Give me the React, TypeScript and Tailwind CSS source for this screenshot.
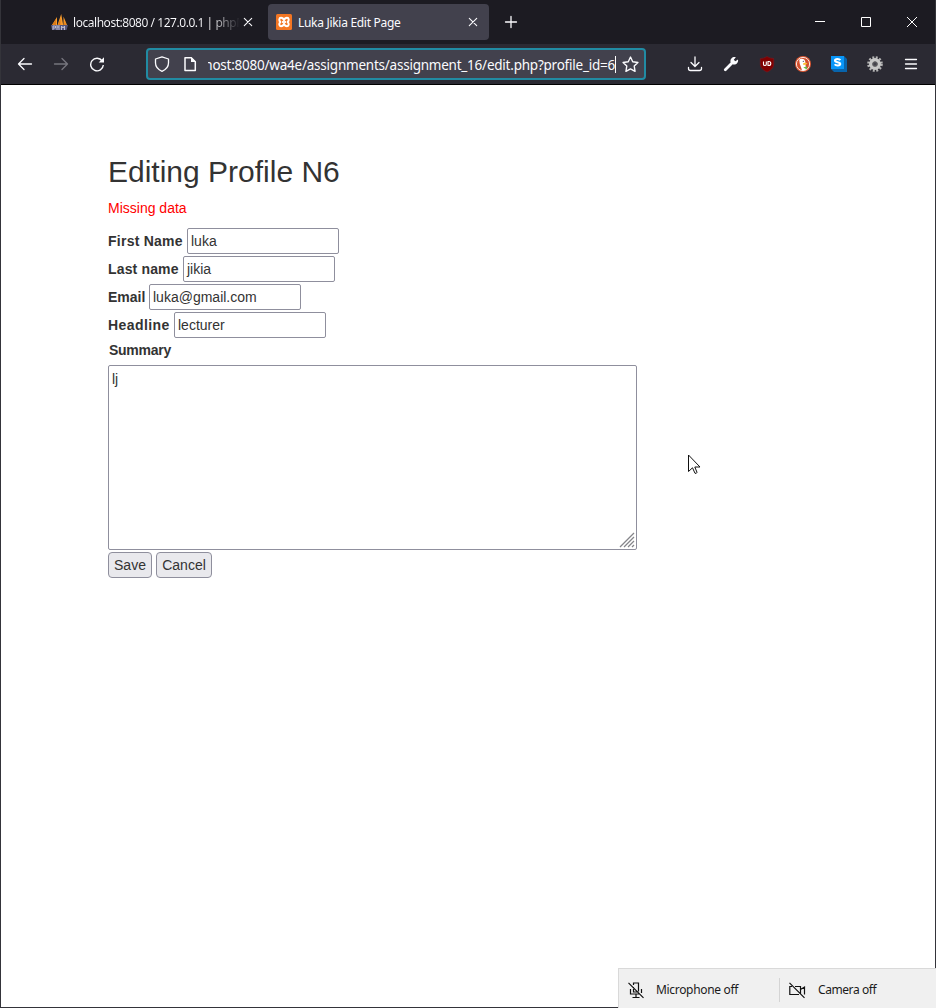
import React from 'react';
import type { ReactNode } from 'react';

function PmaLogo() {
  return (
    <svg className="shrink-0" width="18" height="17" viewBox="0 0 18 17">
      <path d="M1 11 6 3v8zM6.500 11 10.200 0l2 11zM12.500 11V2.500l3.500 8.500z" fill="#f89c2c" />
      <path d="M1 11 5 5v6zM7 11l2.500-7v7zM13 11l1-4 .8 4z" fill="#dc7a16" />
      <path d="M0 11h17l-1.500 5H1z" fill="#55567c" />
      <path d="M2 16v-4h2.500v2H2m4-3v5m0-3h2m0-2v5m2.500 0v-4l1.500 2 1.500-2v4" stroke="#c4c4d8" strokeWidth=".9" fill="none" />
    </svg>
  );
}

function XamppLogo() {
  return (
    <svg className="shrink-0" width="16" height="16" viewBox="0 0 16 16">
      <rect width="16" height="16" rx="1.500" fill="#f37623" />
      <path d="M8 6.200C7.300 4.300 6.300 3.800 5 3.800c-2 0-2.300 2.700-.6 4.200C2.700 9.500 3 12.200 5 12.200c1.300 0 2.300-.5 3-2.400.7 1.900 1.700 2.400 3 2.400 2 0 2.300-2.700.6-4.200 1.700-1.500 1.400-4.200-.6-4.200-1.300 0-2.300.5-3 2.400z" stroke="#fff" strokeWidth="2" fill="none" strokeLinejoin="round" />
      <path d="M6 8h4" stroke="#fff" strokeWidth="1.800" />
    </svg>
  );
}

function Line({ d, size = 16, color = '#fbfbfe', width = 1.3 }: { d: string; size?: number; color?: string; width?: number }) {
  return (
    <svg className="shrink-0" width={size} height={size} viewBox="0 0 16 16" fill="none" stroke={color} strokeWidth={width} strokeLinecap="round" strokeLinejoin="round">
      <path d={d} />
    </svg>
  );
}

function TabStrip() {
  return (
    <div className="flex h-[44px] items-center bg-[#1c1b22] text-[12px] text-[#fbfbfe]">
      <div className="flex h-9 w-[267px] shrink-0 items-center pl-[50px]">
        <PmaLogo />
        <span className="ml-[4px] mt-[2px] w-[167px] shrink-0 whitespace-nowrap bg-gradient-to-r from-[#fbfbfe] from-[82%] to-transparent bg-clip-text tracking-[-0.46px] text-transparent">localhost:8080 / 127.0.0.1 | phpM</span>
        <Line d="M4.300 4.300l7.400 7.400M11.700 4.300l-7.400 7.400" width={1.1} />
      </div>
      <div className="flex h-9 w-[221px] shrink-0 items-center rounded-[4px] bg-[#42414d] pl-2">
        <XamppLogo />
        <span className="ml-[6px] mt-[2px] w-[167px] shrink-0 whitespace-nowrap tracking-[-0.3px]">Luka Jikia Edit Page</span>
        <Line d="M4.300 4.300l7.400 7.400M11.700 4.300l-7.400 7.400" width={1.1} />
      </div>
      <div className="ml-[14px]"><Line d="M8 2.500v11M2.500 8h11" /></div>
      <div className="ml-auto flex items-center gap-[30px] pr-[15px]">
        <svg width="16" height="16"><path d="M3 7.500h10" stroke="#fff" /></svg>
        <svg width="16" height="16"><path d="M3.500 3.500h9v9h-9z" fill="none" stroke="#fff" /></svg>
        <svg width="16" height="16"><path d="M3 3l10 10M13 3 3 13" stroke="#fff" /></svg>
      </div>
    </div>
  );
}

function ToolSlot({ children }: { children: ReactNode }) {
  return <div className="flex w-9 shrink-0 items-center justify-center">{children}</div>;
}

function Gear() {
  return (
    <svg width="16" height="16" viewBox="0 0 16 16">
      <circle cx="8" cy="8" r="6.500" fill="none" stroke="#b5b5b5" strokeWidth="2.600" strokeDasharray="1.900 1.503" />
      <circle cx="8" cy="8" r="4.300" fill="none" stroke="#c8c8c8" strokeWidth="3.400" />
      <circle cx="8" cy="8" r="2.200" fill="#44434c" stroke="#777" strokeWidth=".7" />
    </svg>
  );
}

function Toolbar() {
  return (
    <div className="flex h-[41px] items-center border-b border-black bg-[#2b2a33] text-[#fbfbfe]">
      <div className="flex w-[145px] shrink-0 items-center pl-4">
        <Line d="M14.500 8h-13M7 2.500 1.500 8 7 13.500" />
        <span className="w-5" />
        <Line d="M1.500 8h13M9 2.500 14.500 8 9 13.500" color="#76757e" />
        <span className="w-5" />
        <svg width="16" height="16" viewBox="0 0 16 16">
          <path d="M13.200 5A6.300 6.300 0 1 0 14.300 9" fill="none" stroke="#fbfbfe" strokeWidth="1.400" />
          <path d="M15 1.200v5.300H9.700z" fill="#fbfbfe" />
        </svg>
      </div>
      <div className="flex h-8 w-[500px] shrink-0 items-center rounded-[4px] border-2 border-[#218ba3] bg-[#42414d] pl-[6px]">
        <Line d="M8 .8 14.500 3v4c0 4-2.500 6.500-6.500 8.300C4 13.500 1.500 11 1.500 7V3z" />
        <svg className="ml-3" width="16" height="16" viewBox="0 0 16 16">
          <path d="M3 1.700h6.300l4 4v8.800H3z" fill="none" stroke="#fbfbfe" strokeWidth="1.500" strokeLinejoin="round" />
          <path d="M9 1l5 5H9z" fill="#fbfbfe" />
        </svg>
        <div className="ml-[10px] flex h-6 w-[408px] shrink-0 items-center justify-end overflow-hidden text-[13.5px]">
          <span className="mt-[2px] whitespace-nowrap tracking-[-0.23px]">host:8080/wa4e/assignments/assignment_16/edit.php?profile_id=6</span>
          <span className="h-[17px] w-px shrink-0 bg-white" />
        </div>
        <div className="ml-[6px]"><Line size={17} d="M8 1l2.100 4.400 4.900.7-3.500 3.400.8 4.900L8 12.100l-4.300 2.300.8-4.900L1 6.100l4.900-.7z" /></div>
      </div>
      <div className="ml-[31px] flex items-center">
        <ToolSlot><Line d="M8 1v9M4 6.500l4 4 4-4M1.500 11.500v1q0 2 2 2h9q2 0 2-2v-1" /></ToolSlot>
        <ToolSlot>
          <svg width="16" height="16" viewBox="0 0 16 16">
            <path d="M2.300 13.700 9 7" stroke="#fbfbfe" strokeWidth="2.800" strokeLinecap="round" />
            <path d="M12.800 1.200 10.800 3.700l1.500 1.500L15 3.500C15.600 6.500 13.500 9 10 8.500L7.500 6C7 2.500 10 .3 12.800 1.200z" fill="#fbfbfe" />
          </svg>
        </ToolSlot>
        <ToolSlot>
          <svg width="16" height="17" viewBox="0 0 16 17">
            <path d="M8 .5Q11 2.500 14.700 2.500V8c0 4-3.200 6.500-6.700 8-3.500-1.500-6.700-4-6.700-8V2.500Q5 2.500 8 .5z" fill="#800000" stroke="#7a1a22" strokeWidth=".6" />
            <path d="M4.500 5.500v2.700q0 1.300 1.400 1.300t1.400-1.300V5.500M9 5.500v4h.800q2 0 2-2t-2-2z" fill="none" stroke="#fff" strokeWidth="1.100" />
          </svg>
        </ToolSlot>
        <ToolSlot>
          <svg width="16" height="16" viewBox="0 0 16 16">
            <circle cx="8" cy="8" r="8" fill="#de5833" />
            <circle cx="8" cy="8" r="6.600" fill="#d3502e" stroke="#f6e6e0" strokeWidth="1" />
            <path d="M4.200 3.800C6 1.800 10.200 2.500 10.400 6.200L10.500 9l.8 4.500q-2 1-4.300.5L4.800 8z" fill="#fff" />
            <path d="M8.300 7q2.400-.8 4.300.2Q11.200 9.200 8.300 9z" fill="#fdc12d" />
            <path d="M8.300 11.500l3.600-1.200v3.200z" fill="#65bc46" />
            <circle cx="8.300" cy="5.300" r=".6" fill="#345" />
          </svg>
        </ToolSlot>
        <ToolSlot>
          <svg width="16" height="16" viewBox="0 0 16 16">
            <path d="M13 0l3 3v13H3l-3-3z" fill="#0864ac" />
            <path d="M0 0h13v13H0z" fill="#0996f8" />
            <path d="M9.300 4.200Q8.500 3 6.500 3 4 3 4 4.600c0 2.300 5.200 1.100 5.200 3.500C9.200 10 4.800 10 3.700 8.300" fill="none" stroke="#fff" strokeWidth="2.100" />
          </svg>
        </ToolSlot>
        <ToolSlot><Gear /></ToolSlot>
        <ToolSlot><Line d="M2.500 3.500h11M2.500 8h11M2.500 12.500h11" /></ToolSlot>
      </div>
    </div>
  );
}

function Field({ label, value, labelClass }: { label: string; value: string; labelClass: string }) {
  return (
    <div className="flex h-7 items-center">
      <label className={`shrink-0 whitespace-nowrap font-bold ${labelClass}`}>{label}</label>
      <div className="flex h-[26px] w-[152px] items-center rounded-[2px] border border-[#8f8f9d] px-[3px]">{value}</div>
    </div>
  );
}

function CallStatus() {
  return (
    <div className="absolute bottom-0 right-0 flex h-10 w-[318px] items-center border-l border-t border-[#d9d9d9] bg-[#f0f0f0] text-[12px] text-[#1b1b1b]">
      <svg className="ml-[9px] mt-[3px]" width="17" height="17" viewBox="0 0 17 17" fill="none" stroke="#111" strokeWidth="1.200">
        <path d="M5.500 3V1h5v8.500M5.500 5v5h4M2.500 7v5h9M13.500 7v4M8 12.500v3M4.500 15.500h7M.5.800l15 15" />
      </svg>
      <span className="ml-[11px] mt-[3px] w-[123px] whitespace-nowrap tracking-[-0.32px]">Microphone off</span>
      <span className="mt-[3px] h-6 w-px bg-[#d4d4d4]" />
      <svg className="ml-[9px] mt-[3px]" width="17" height="17" viewBox="0 0 17 17" fill="none" stroke="#111" strokeWidth="1.200">
        <path d="M3 4.500H.8v8H10M6 4.500h5.500v7M11.500 7.500l4-2.500v7.500M.5.800l15 15" />
      </svg>
      <span className="ml-[12px] mt-[3px] whitespace-nowrap tracking-[-0.42px]">Camera off</span>
    </div>
  );
}

export default function App() {
  return (
    <div className="relative h-[1008px] w-[936px] overflow-hidden font-['Noto_Sans',sans-serif]">
      <div className="flex h-full flex-col border-b border-l border-r border-[#34343a] bg-white">
        <TabStrip />
        <Toolbar />
        <main className="flex flex-col pl-[107px] pt-[68px] font-['Liberation_Sans',sans-serif] text-[14px] leading-5 text-[#333]">
          <h1 className="h-[45px] text-[30px] leading-[38px]">Editing Profile N6</h1>
          <p className="mb-[9px] text-[#f00]">Missing data</p>
          <Field label="First Name" value="luka" labelClass="w-[79px] tracking-[0.25px]" />
          <Field label="Last name" value="jikia" labelClass="w-[75px] tracking-[0.15px]" />
          <Field label="Email" value="luka@gmail.com" labelClass="w-[41px]" />
          <Field label="Headline" value="lecturer" labelClass="w-[66px] tracking-[0.42px]" />
          <label className="h-[26px] pl-px pt-px font-bold leading-5 tracking-[-0.27px]">Summary</label>
          <div className="flex h-[185px] w-[529px] items-start justify-between rounded-[2px] border border-[#8f8f9d] px-[3px] pt-[3px]">
            <span>lj</span>
            <svg className="mb-[1px] mr-[-2px] self-end" width="16" height="16" viewBox="0 0 16 16"><path d="M1 15 15 1M5 15 15 5M9 15l6-6M13 15l2-2" stroke="#85858a" strokeWidth="1.300" /></svg>
          </div>
          <div className="mt-[2px] flex gap-1">
            <button className="h-[26px] w-[44px] rounded-[4px] border border-[#8f8f9d] bg-[#e9e9ed]">Save</button>
            <button className="h-[26px] w-[56px] rounded-[4px] border border-[#8f8f9d] bg-[#e9e9ed]">Cancel</button>
          </div>
        </main>
      </div>
      <svg className="absolute left-[688px] top-[454px]" width="14" height="21" viewBox="0 0 14 21">
        <path d="M.5 1v16.500l4-3.700 2.500 5.500q1.500.5 2-1L6.800 13H12z" fill="#fff" stroke="#111" />
      </svg>
      <CallStatus />
    </div>
  );
}
